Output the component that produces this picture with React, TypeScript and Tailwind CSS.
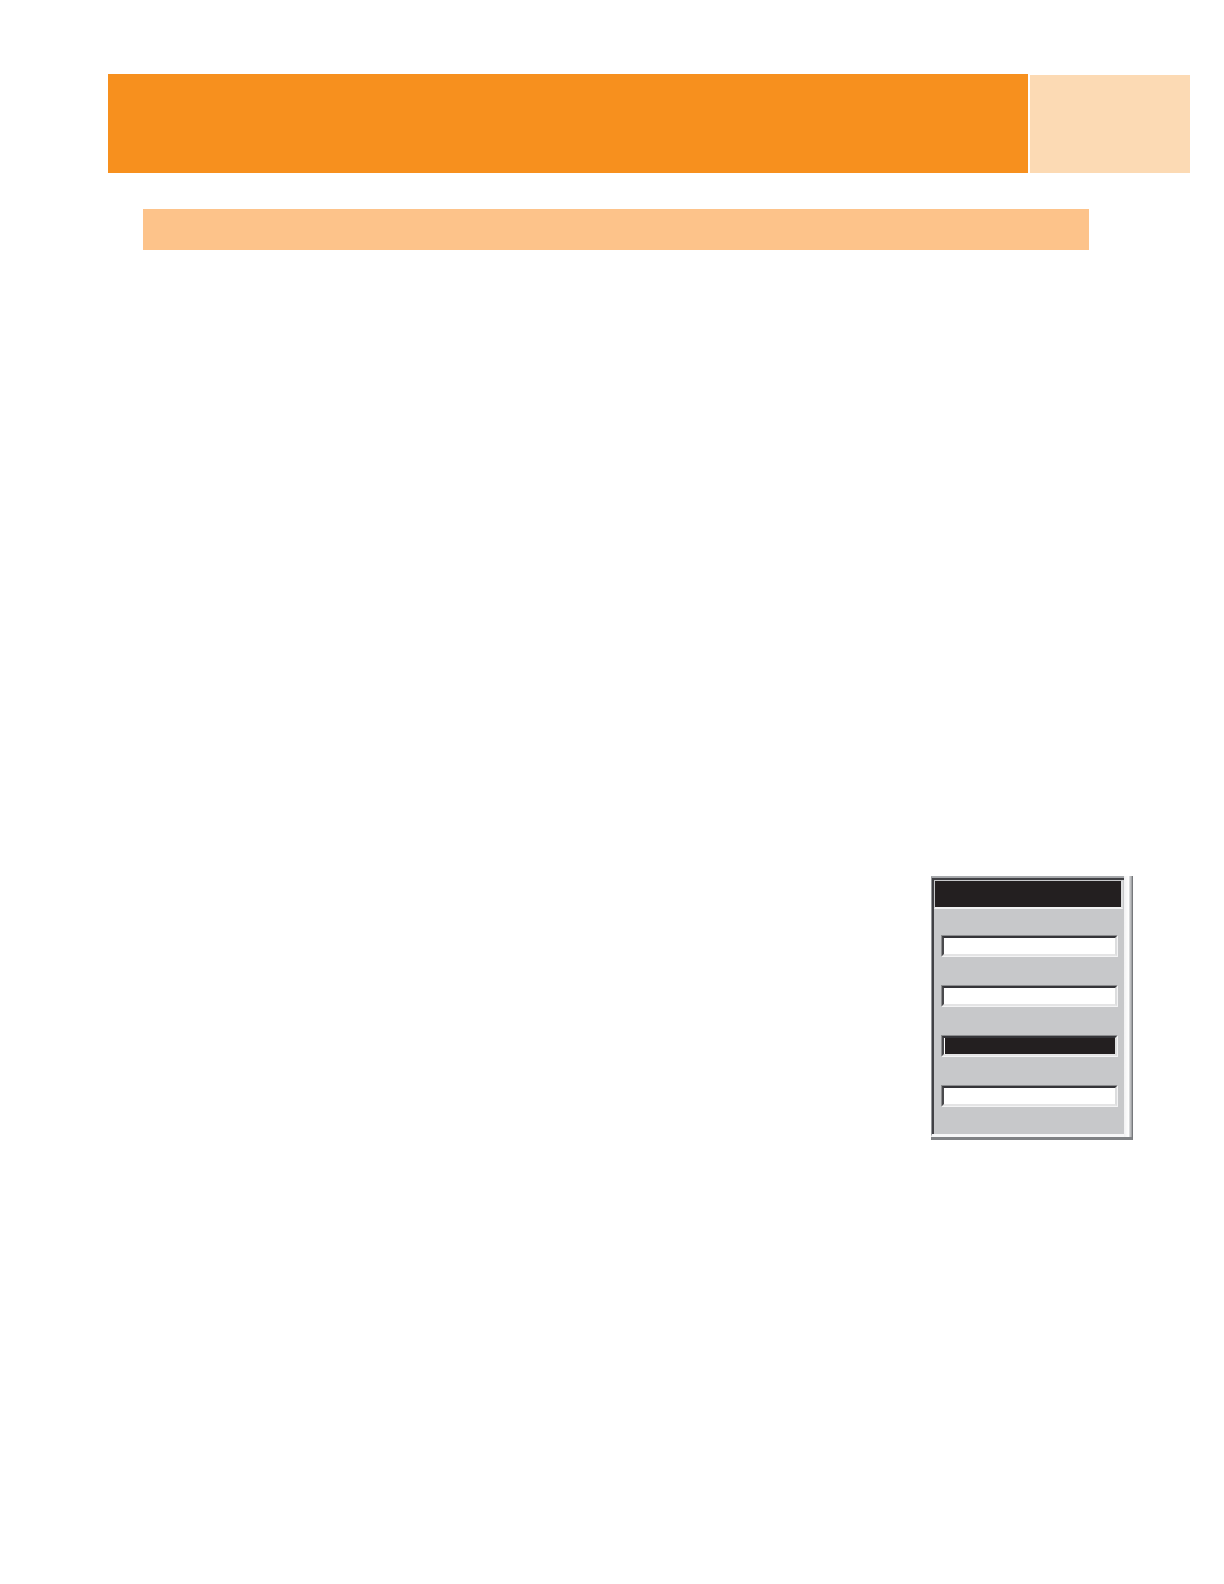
import React from 'react';

const fields = [
  { id: 'field-1', selected: false },
  { id: 'field-2', selected: false },
  { id: 'field-3', selected: true },
  { id: 'field-4', selected: false },
];

function SunkenField({ id, selected }: { id: string; selected: boolean }) {
  return (
    <div className="border border-t-[#8c8d8f] border-l-[#8c8d8f] border-r-[#f2f2f3] border-b-[#f4f4f5]">
      <div className="border-2 border-t-[#353539] border-l-[#4a4a4d] border-r-[#dcddde] border-b-[#e4e4e5]">
        <input
          id={id}
          type="text"
          aria-label={id}
          className={`block h-4 w-full rounded-none px-1 text-xs outline-none ${
            selected ? 'border-l border-white bg-[#231f20] text-white' : 'bg-white text-black'
          }`}
        />
      </div>
    </div>
  );
}

function Panel() {
  return (
    <section className="w-[202px] border-r border-r-[#77797c] border-b-[3px] border-b-[#808285] bg-white">
      <div className="flex">
        <div className="min-w-0 flex-1 border-t-2 border-l border-t-[#a7a9ac] border-l-[#939598] border-b-[3px] border-b-[#f7f7f8]">
          <div className="border-t-2 border-l-2 border-[#414145] bg-[#c7c8ca]">
            {/* title strip */}
            <header className="mr-px h-[29px] border-t border-r-2 border-b-2 border-l border-t-[#c7c8ca] border-r-[#dcddde] border-b-[#f1f1f2] border-l-[#c7c8ca] bg-[#231f20]" />
            <div className="flex flex-col gap-7 pt-[26px] pr-[6px] pb-[27px] pl-[7px]">
              {fields.map((field) => (
                <SunkenField key={field.id} id={field.id} selected={field.selected} />
              ))}
            </div>
          </div>
        </div>
        {/* raised edge on the right side */}
        <div className="w-[5px] bg-linear-to-r from-[#f1f1f2] to-white" />
        <div className="w-[3px] bg-linear-to-r from-[#e6e7e8] to-[#96989b]" />
      </div>
    </section>
  );
}

export default function App() {
  return (
    <main className="min-h-screen bg-white pt-[74px] pr-[34px] pb-16 pl-[108px]">
      <div className="flex items-end gap-[2px]">
        <div className="h-[99px] flex-1 bg-[#f7901e]" />
        <div className="h-[98px] w-40 bg-[#fcdab4]" />
      </div>

      <div className="mt-9 mr-[101px] ml-[35px] h-[41px] bg-[#fdc38a]" />

      <div className="mt-[626px] mr-[57px] flex justify-end">
        <Panel />
      </div>
    </main>
  );
}
